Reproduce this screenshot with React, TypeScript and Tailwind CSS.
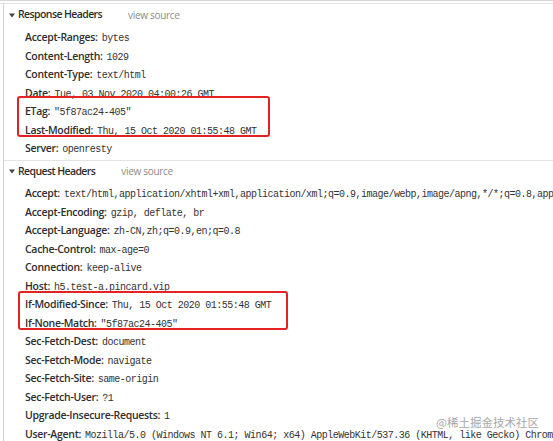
type Header = { name: string; value: string };

const responseTop: Header[] = [
  { name: 'Accept-Ranges', value: 'bytes' },
  { name: 'Content-Length', value: '1029' },
  { name: 'Content-Type', value: 'text/html' },
  { name: 'Date', value: 'Tue, 03 Nov 2020 04:00:26 GMT' },
];

const responseMarked: Header[] = [
  { name: 'ETag', value: '"5f87ac24-405"' },
  { name: 'Last-Modified', value: 'Thu, 15 Oct 2020 01:55:48 GMT' },
];

const responseBottom: Header[] = [{ name: 'Server', value: 'openresty' }];

const requestTop: Header[] = [
  {
    name: 'Accept',
    value:
      'text/html,application/xhtml+xml,application/xml;q=0.9,image/webp,image/apng,*/*;q=0.8,application/signed-exchange;v=b3;q=0.9',
  },
  { name: 'Accept-Encoding', value: 'gzip, deflate, br' },
  { name: 'Accept-Language', value: 'zh-CN,zh;q=0.9,en;q=0.8' },
  { name: 'Cache-Control', value: 'max-age=0' },
  { name: 'Connection', value: 'keep-alive' },
  { name: 'Host', value: 'h5.test-a.pincard.vip' },
];

const requestMarked: Header[] = [
  { name: 'If-Modified-Since', value: 'Thu, 15 Oct 2020 01:55:48 GMT' },
  { name: 'If-None-Match', value: '"5f87ac24-405"' },
];

const requestBottom: Header[] = [
  { name: 'Sec-Fetch-Dest', value: 'document' },
  { name: 'Sec-Fetch-Mode', value: 'navigate' },
  { name: 'Sec-Fetch-Site', value: 'same-origin' },
  { name: 'Sec-Fetch-User', value: '?1' },
  { name: 'Upgrade-Insecure-Requests', value: '1' },
  {
    name: 'User-Agent',
    value:
      'Mozilla/5.0 (Windows NT 6.1; Win64; x64) AppleWebKit/537.36 (KHTML, like Gecko) Chrome/86.0.4240.111 Safari/537.36',
  },
];

const Row = ({ h }: { h: Header }) => (
  <div className="h-[18.5px] leading-[18.5px] pl-[21px] whitespace-nowrap overflow-hidden">
    <span className="font-['Open_Sans',sans-serif] font-semibold text-[10.5px] tracking-[-0.3px] text-[#2e2e2e]">
      {h.name}:
    </span>
    <span className="ml-[4px] font-['Liberation_Mono',monospace] text-[10px] tracking-[-0.5px] text-[#333]">
      {h.value}
    </span>
  </div>
);

const SectionTitle = ({ title }: { title: string }) => (
  <div className="flex items-center h-[20px] pl-[5px]">
    <svg width="6" height="5" viewBox="0 0 6 5" className="mr-[3px]">
      <path d="M0 0.5 L6 0.5 L3 4.5 Z" fill="#444" />
    </svg>
    <span className="font-['Open_Sans',sans-serif] font-semibold text-[10.5px] tracking-[-0.6px] text-[#2e2e2e]">
      {title}
    </span>
    <span className="ml-[26px] font-['Open_Sans',sans-serif] text-[10px] tracking-[-0.3px] text-[#8c8c8c]">
      view source
    </span>
  </div>
);

export default function App() {
  return (
    <div className="relative w-[553px] h-[441px] overflow-hidden bg-white flex flex-col">
      <div className="h-[1.5px] bg-[#d6d6d6]" />
      <div className="h-[3.5px]" />
      <div className="h-px bg-[#e6e6e6]" />

      <div className="flex-1 ml-[3px] border-l border-[#d0d0d0]">
        {/* Response Headers */}
        <div className="pt-[2px] pb-[4px] border-b border-[#e3e3e3]">
          <SectionTitle title="Response Headers" />
          <div className="pt-[1px]">
            {responseTop.map((h) => (
              <Row key={h.name} h={h} />
            ))}
            <div className="relative">
              {responseMarked.map((h) => (
                <Row key={h.name} h={h} />
              ))}
              <div className="absolute left-[13px] top-[-4px] w-[253px] h-[41px] border-2 border-[#e32323] rounded-[3px]" />
            </div>
            {responseBottom.map((h) => (
              <Row key={h.name} h={h} />
            ))}
          </div>
        </div>

        {/* Request Headers */}
        <div className="pt-[1px]">
          <SectionTitle title="Request Headers" />
          <div className="pt-[0.5px]">
            {requestTop.map((h) => (
              <Row key={h.name} h={h} />
            ))}
            <div className="relative">
              {requestMarked.map((h) => (
                <Row key={h.name} h={h} />
              ))}
              <div className="absolute left-[14px] top-[-2px] w-[270px] h-[39px] border-2 border-[#e32323] rounded-[3px]" />
            </div>
            {requestBottom.map((h) => (
              <Row key={h.name} h={h} />
            ))}
          </div>
        </div>
      </div>

      {/* watermark */}
      <div className="absolute left-[436px] top-[414px] font-['Noto_Sans_CJK_SC',sans-serif] text-[11.5px] leading-[16px] text-[#a8a8a8] whitespace-nowrap">
        @稀土掘金技术社区
      </div>
    </div>
  );
}
